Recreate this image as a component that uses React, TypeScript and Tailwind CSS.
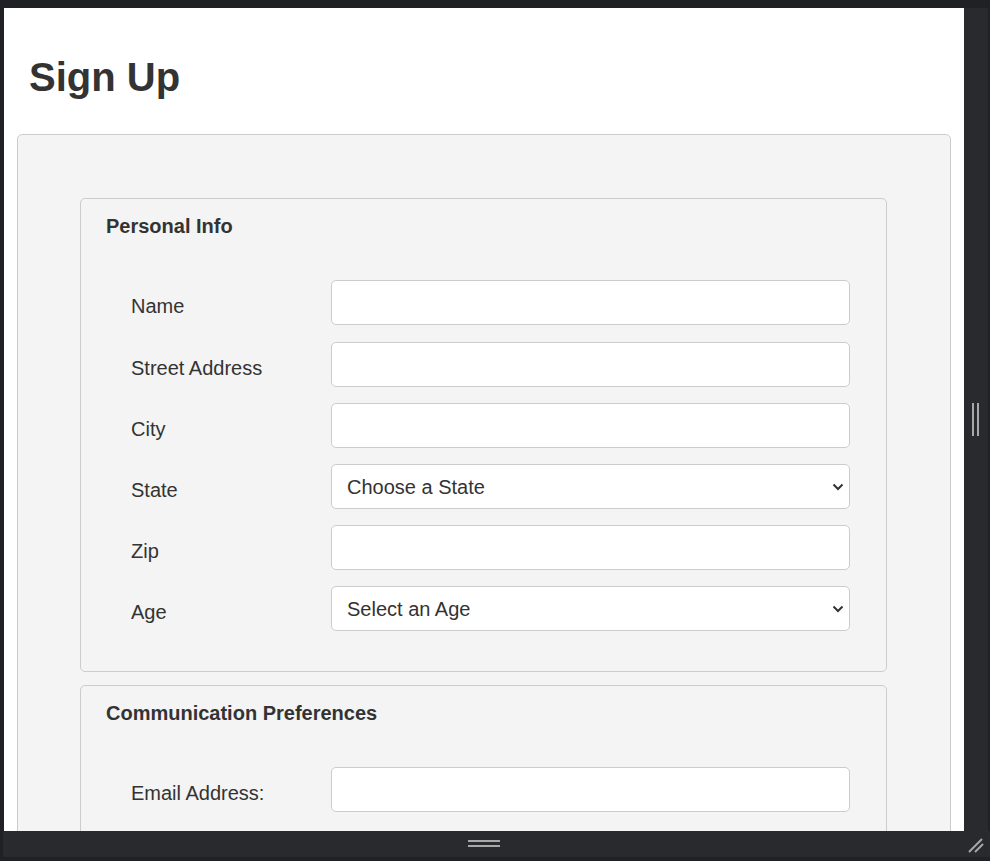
import React from "react";

const font = "font-['Liberation_Sans',Arial,sans-serif]";

function Chevron() {
  return (
    <svg className="pointer-events-none absolute right-[6px] top-[19px]" width="12" height="8" viewBox="0 0 12 8">
      <path d="M1.5 1.5 L6 6 L10.5 1.5" fill="none" stroke="#333" strokeWidth="2" />
    </svg>
  );
}

function Row({ label, kind, placeholder, extra }: { label: string; kind: "input" | "select"; placeholder?: string; extra?: boolean }) {
  return (
    <div className={`flex items-start ${extra ? "mb-[1px]" : ""}`}>
      <label className="w-[200px] shrink-0 pt-[15px] text-[20px] leading-[23px] text-[#333]">{label}</label>
      {kind === "input" ? (
        <input
          type="text"
          className="w-[519px] h-[45px] rounded-[5px] border border-[#ccc] bg-white px-[15px] text-[20px] text-[#333] outline-none"
        />
      ) : (
        <div className="relative w-[519px] h-[45px]">
          <select
            className={`appearance-none w-[519px] h-[45px] rounded-[5px] border border-[#ccc] bg-white pl-[15px] pr-[24px] text-[20px] text-[#333] outline-none ${font}`}
            defaultValue=""
          >
            <option value="">{placeholder}</option>
          </select>
          <Chevron />
        </div>
      )}
    </div>
  );
}

function Fieldset({ title, children }: { title: string; children: React.ReactNode }) {
  return (
    <div className="rounded-[5px] border border-[#ccc] bg-[#f4f4f4] pt-[16px] pb-[40px]">
      <div className="pl-[25px] text-[20px] font-bold leading-[23px] text-[#333]">{title}</div>
      <div className="mt-[42px] pl-[50px] flex flex-col gap-[16px]">{children}</div>
    </div>
  );
}

export default function App() {
  return (
    <div className={`w-[990px] h-[861px] bg-[#202124] flex flex-col overflow-hidden ${font}`}>
      <div className="h-[8px] shrink-0" />
      <div className="flex h-[823px] shrink-0">
        <div className="w-[4px] shrink-0" />
        <div className="w-[960px] shrink-0 bg-white overflow-hidden text-[#333]">
          <h1 className="pt-[46px] pl-[25px] text-[40px] font-bold leading-[46px] text-[#333]">Sign Up</h1>
          <div className="mt-[34px] mx-[13px] rounded-[5px] border border-[#ccc] bg-[#f4f4f4] pt-[63px] pl-[62px] pr-[63px] pb-[40px] flex flex-col gap-[13px]">
            <Fieldset title="Personal Info">
              <Row label="Name" kind="input" extra />
              <Row label="Street Address" kind="input" />
              <Row label="City" kind="input" />
              <Row label="State" kind="select" placeholder="Choose a State" />
              <Row label="Zip" kind="input" />
              <Row label="Age" kind="select" placeholder="Select an Age" />
            </Fieldset>
            <Fieldset title="Communication Preferences">
              <Row label="Email Address:" kind="input" />
            </Fieldset>
          </div>
        </div>
        <div className="w-[24px] shrink-0 bg-[#292a2d] relative">
          <div className="absolute left-[8px] top-[395px] flex gap-[3px]">
            <div className="w-[2px] h-[33px] bg-[#a8a8a8]" />
            <div className="w-[2px] h-[33px] bg-[#a8a8a8]" />
          </div>
        </div>
      </div>
      <div className="h-[26px] shrink-0 ml-[3px] bg-[#292a2d] relative">
        <div className="absolute left-[465px] top-[9px] flex flex-col gap-[3px]">
          <div className="w-[32px] h-[2px] bg-[#a8a8a8]" />
          <div className="w-[32px] h-[2px] bg-[#a8a8a8]" />
        </div>
        <svg className="absolute left-[964px] top-[5px]" width="18" height="18" viewBox="0 0 18 18">
          <line x1="2" y1="16" x2="15" y2="3" stroke="#a8a8a8" strokeWidth="2" />
          <line x1="8" y1="16" x2="16" y2="8" stroke="#a8a8a8" strokeWidth="2" />
        </svg>
      </div>
    </div>
  );
}
